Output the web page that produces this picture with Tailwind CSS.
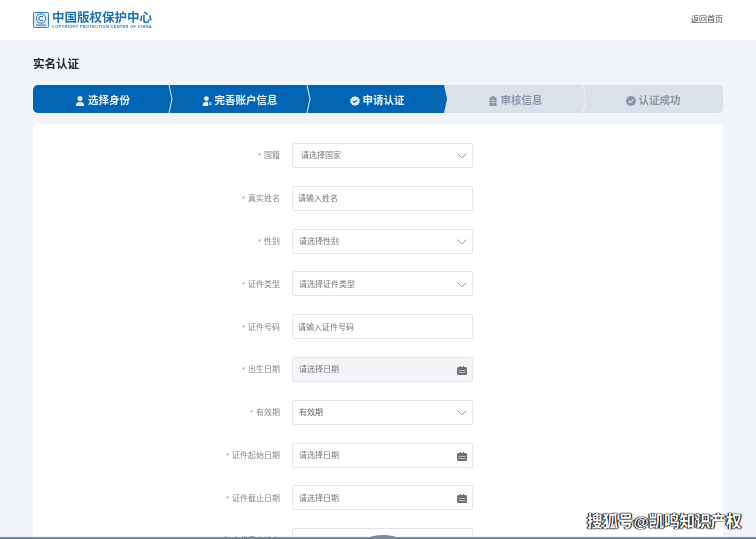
<!DOCTYPE html>
<html lang="zh-CN">
<head>
    <meta charset="UTF-8"/>
    <meta name="viewport" content="width=device-width, initial-scale=1.0"/>
    <title>实名认证</title>
    <script src="https://cdn.jsdelivr.net/npm/@tailwindcss/browser@4"></script>
</head>
<body class="relative h-[539px] w-[756px] overflow-hidden bg-[#f1f4f8] font-['Liberation_Sans','Noto_Sans_CJK_SC',sans-serif]">

<!-- header -->
<header class="flex h-10 items-center justify-between bg-white px-[33px] blur-[0.4px]">
    <div class="flex items-center gap-[3px]">
        <svg class="h-[16px] w-[16px]" viewBox="0 0 16 16" fill="none">
            <rect x="0.5" y="0.5" width="15" height="15" rx="1" fill="#dcebf7" stroke="#2f7fc1"/>
            <circle cx="8" cy="6.500" r="4.600" fill="#fff" stroke="#1e6fb5"/>
            <path d="M9.800 5.200a2.200 2.200 0 1 0 0 2.600" stroke="#1e6fb5" stroke-width="1.100"/>
            <rect x="3" y="12.400" width="10" height="1.500" fill="#5b9ad0"/>
        </svg>
        <div class="flex flex-col">
            <span class="text-[12.500px] leading-[12px] font-bold text-[#1f72b8]">中国版权保护中心</span>
            <span class="whitespace-nowrap text-[4px] leading-[5px] font-bold tracking-[0.3px] text-[#2f7fc1]">COPYRIGHT PROTECTION CENTER OF CHINA</span>
        </div>
    </div>
    <a class="text-[8px] text-[#444]">返回首页</a>
</header>

<main class="px-[33px] blur-[0.4px]">
    <h1 class="mt-4 text-[11.500px] leading-4 font-bold text-[#222]">实名认证</h1>

    <!-- steps -->
    <div class="relative mt-[13px] flex h-7 overflow-hidden rounded-[5px] bg-[#dbe1e8] text-[10.500px] font-bold">
        <div class="flex w-[136px] items-center justify-center gap-[3px] bg-[#0265b4] pt-1 pl-[3px] text-[#e9f1f8]">
            <svg class="h-[10px] w-[10px]" viewBox="0 0 10 10" fill="currentColor"><circle cx="5" cy="2.600" r="2.500"/><path d="M1 10V8.200C1 6.600 3 5.700 5 5.700s4 .9 4 2.500V10z"/></svg>
            <span>选择身份</span>
        </div>
        <div class="flex w-[138px] items-center justify-center gap-[3px] bg-[#0265b4] pt-1 pl-[3px] text-[#e9f1f8]">
            <svg class="h-[10px] w-[10px]" viewBox="0 0 10 10" fill="currentColor"><circle cx="4.400" cy="2.600" r="2.400"/><path d="M.8 10V8.200c0-1.600 1.800-2.500 3.600-2.500.6 0 1.200.1 1.700.3v4z"/><path d="M7 6.500h2.600v.9H7zm0 1.700h2.600v.9H7z"/></svg>
            <span>完善账户信息</span>
        </div>
        <div class="flex w-[137px] items-center justify-center gap-[3px] bg-[#0265b4] pt-1 pl-[3px] text-[#e9f1f8]">
            <svg class="h-[10px] w-[10px]" viewBox="0 0 10 10"><path d="M5 0l1.300 1 1.700-.1.500 1.600 1.400 1-.6 1.500.6 1.500-1.400 1-.5 1.600-1.700-.1L5 10 3.700 9l-1.700.1-.5-1.600-1.400-1L.7 5 .1 3.500l1.400-1L2 .9 3.700 1z" fill="currentColor"/><path d="M3 5l1.500 1.500L7 3.800" fill="none" stroke="#0265b4" stroke-width="1.200"/></svg>
            <span>申请认证</span>
        </div>
        <div class="flex w-[139px] items-center justify-center gap-[3px] pt-1 pl-[3px] text-[#8a97a8]">
            <svg class="h-[10px] w-[10px]" viewBox="0 0 10 10" fill="currentColor"><path d="M3.500 0h3v1.200h2V10h-7V1.200h2z"/><path d="M3 4h4v.8H3zm0 2h4v.8H3z" fill="#dbe1e8"/></svg>
            <span>审核信息</span>
        </div>
        <div class="flex flex-1 items-center justify-center gap-[3px] pt-1 text-[#8a97a8]">
            <svg class="h-[10px] w-[10px]" viewBox="0 0 10 10"><circle cx="5" cy="5" r="5" fill="currentColor"/><path d="M2.800 5l1.600 1.600 2.800-3" fill="none" stroke="#dbe1e8" stroke-width="1.200"/></svg>
            <span>认证成功</span>
        </div>
        <!-- chevrons between the steps -->
        <svg class="absolute inset-0 h-7 w-[690px]" viewBox="0 0 690 28" fill="none">
            <path d="M136 0l3 14-3 14" stroke="#e6eef6"/>
            <path d="M274 0l3 14-3 14" stroke="#e6eef6"/>
            <path d="M411 0l3 14-3 14z" fill="#0265b4"/>
            <path d="M550 0l3 14-3 14" stroke="#eef1f4"/>
        </svg>
    </div>

    <!-- form card -->
    <section class="mt-[11px] flex h-[460px] flex-col gap-[17.800px] rounded-t-[5px] bg-white pt-[19px] text-[8px]">
        <div class="flex items-center">
            <label class="w-[247px] text-right text-[#888]"><span class="mr-[3px] text-[#f0787a]">*</span>国籍</label>
            <div class="ml-[12px] flex h-[25px] w-[181px] items-center justify-between rounded-[2px] border border-[#e3e7ec] bg-white pr-[5px] pl-[8px] text-[#777]">
                <span>请选择国家</span>
                <svg class="h-[6px] w-[10px]" viewBox="0 0 10 6" fill="none" stroke="#9aa3ad"><path d="M.5.5L5 5 9.500.5"/></svg>
            </div>
        </div>
        <div class="flex items-center">
            <label class="w-[247px] pt-[2px] text-right text-[#888]"><span class="mr-[3px] text-[#f0787a]">*</span>真实姓名</label>
            <div class="ml-[12px] flex h-[25px] w-[181px] items-center rounded-[2px] border border-[#e3e7ec] bg-white pt-[2px] pl-[5px] text-[#777]">请输入姓名</div>
        </div>
        <div class="flex items-center">
            <label class="w-[247px] pt-[2px] text-right text-[#888]"><span class="mr-[3px] text-[#f0787a]">*</span>性别</label>
            <div class="ml-[12px] flex h-[25px] w-[181px] items-center justify-between rounded-[2px] border border-[#e3e7ec] bg-white pt-[2px] pr-[5px] pl-[6px] text-[#777]">
                <span>请选择性别</span>
                <svg class="h-[6px] w-[10px]" viewBox="0 0 10 6" fill="none" stroke="#9aa3ad"><path d="M.5.5L5 5 9.500.5"/></svg>
            </div>
        </div>
        <div class="flex items-center">
            <label class="w-[247px] pt-[2px] text-right text-[#888]"><span class="mr-[3px] text-[#f0787a]">*</span>证件类型</label>
            <div class="ml-[12px] flex h-[25px] w-[181px] items-center justify-between rounded-[2px] border border-[#e3e7ec] bg-white pt-[2px] pr-[5px] pl-[6px] text-[#777]">
                <span>请选择证件类型</span>
                <svg class="h-[6px] w-[10px]" viewBox="0 0 10 6" fill="none" stroke="#9aa3ad"><path d="M.5.5L5 5 9.500.5"/></svg>
            </div>
        </div>
        <div class="flex items-center">
            <label class="w-[247px] pt-[2px] text-right text-[#888]"><span class="mr-[3px] text-[#f0787a]">*</span>证件号码</label>
            <div class="ml-[12px] flex h-[25px] w-[181px] items-center rounded-[2px] border border-[#e3e7ec] bg-white pt-[2px] pl-[5px] text-[#777]">请输入证件号码</div>
        </div>
        <div class="flex items-center">
            <label class="w-[247px] pt-[2px] text-right text-[#888]"><span class="mr-[3px] text-[#f0787a]">*</span>出生日期</label>
            <div class="ml-[12px] flex h-[25px] w-[181px] items-center justify-between rounded-[2px] border border-[#e3e7ec] bg-[#f4f5f9] pt-[2px] pr-[5px] pl-[6px] text-[#777]">
                <span>请选择日期</span>
                <svg class="h-[9px] w-[10px]" viewBox="0 0 10 9"><path d="M1.500 1H3V0h1v1h2V0h1v1h1.500A1.500 1.500 0 0 1 10 2.500V7.500A1.500 1.500 0 0 1 8.500 9h-7A1.500 1.500 0 0 1 0 7.500V2.500A1.500 1.500 0 0 1 1.500 1z" fill="#6e6e6e"/><path d="M1.500 4.500h7M1.500 6.500h7" stroke="#c9cbd0" stroke-width=".8"/></svg>
            </div>
        </div>
        <div class="flex items-center">
            <label class="w-[247px] pt-[2px] text-right text-[#888]"><span class="mr-[3px] text-[#f0787a]">*</span>有效期</label>
            <div class="ml-[12px] flex h-[25px] w-[181px] items-center justify-between rounded-[2px] border border-[#e3e7ec] bg-white pt-[2px] pr-[5px] pl-[6px] text-[#666]">
                <span>有效期</span>
                <svg class="h-[6px] w-[10px]" viewBox="0 0 10 6" fill="none" stroke="#9aa3ad"><path d="M.5.5L5 5 9.500.5"/></svg>
            </div>
        </div>
        <div class="flex items-center">
            <label class="w-[247px] pt-[2px] text-right text-[#888]"><span class="mr-[3px] text-[#f0787a]">*</span>证件起始日期</label>
            <div class="ml-[12px] flex h-[25px] w-[181px] items-center justify-between rounded-[2px] border border-[#e3e7ec] bg-white pt-[2px] pr-[5px] pl-[6px] text-[#777]">
                <span>请选择日期</span>
                <svg class="h-[9px] w-[10px]" viewBox="0 0 10 9"><path d="M1.500 1H3V0h1v1h2V0h1v1h1.500A1.500 1.500 0 0 1 10 2.500V7.500A1.500 1.500 0 0 1 8.500 9h-7A1.500 1.500 0 0 1 0 7.500V2.500A1.500 1.500 0 0 1 1.500 1z" fill="#6e6e6e"/><path d="M1.500 4.500h7M1.500 6.500h7" stroke="#c9cbd0" stroke-width=".8"/></svg>
            </div>
        </div>
        <div class="flex items-center">
            <label class="w-[247px] pt-[2px] text-right text-[#888]"><span class="mr-[3px] text-[#f0787a]">*</span>证件截止日期</label>
            <div class="ml-[12px] flex h-[25px] w-[181px] items-center justify-between rounded-[2px] border border-[#e3e7ec] bg-white pt-[2px] pr-[5px] pl-[6px] text-[#777]">
                <span>请选择日期</span>
                <svg class="h-[9px] w-[10px]" viewBox="0 0 10 9"><path d="M1.500 1H3V0h1v1h2V0h1v1h1.500A1.500 1.500 0 0 1 10 2.500V7.500A1.500 1.500 0 0 1 8.500 9h-7A1.500 1.500 0 0 1 0 7.500V2.500A1.500 1.500 0 0 1 1.500 1z" fill="#6e6e6e"/><path d="M1.500 4.500h7M1.500 6.500h7" stroke="#c9cbd0" stroke-width=".8"/></svg>
            </div>
        </div>
        <div class="flex items-center">
            <label class="w-[247px] text-right text-[#888]"><span class="mr-[3px] text-[#f0787a]">*</span>法定代表人姓名</label>
            <div class="ml-[12px] flex h-[25px] w-[181px] items-center rounded-[2px] border border-[#e3e7ec] bg-white pl-[5px] text-[#777]"></div>
        </div>
    </section>
</main>

<!-- bits that lie over the page bottom -->
<div class="absolute top-[535px] left-[333px] h-[100px] w-[100px] rounded-full bg-[#7b8ba0]"></div>
<div class="absolute right-0 bottom-0 left-0 h-[2px] bg-[#6b8cab]"></div>
<div class="absolute top-[512px] left-[587px] whitespace-nowrap text-[15.500px] leading-5 font-bold text-white [text-shadow:0_0_1px_#000,0_0_1px_#000,1px_0_1px_#000,-1px_0_1px_#000]">搜狐号@凯鸣知识产权</div>
</body>
</html>
